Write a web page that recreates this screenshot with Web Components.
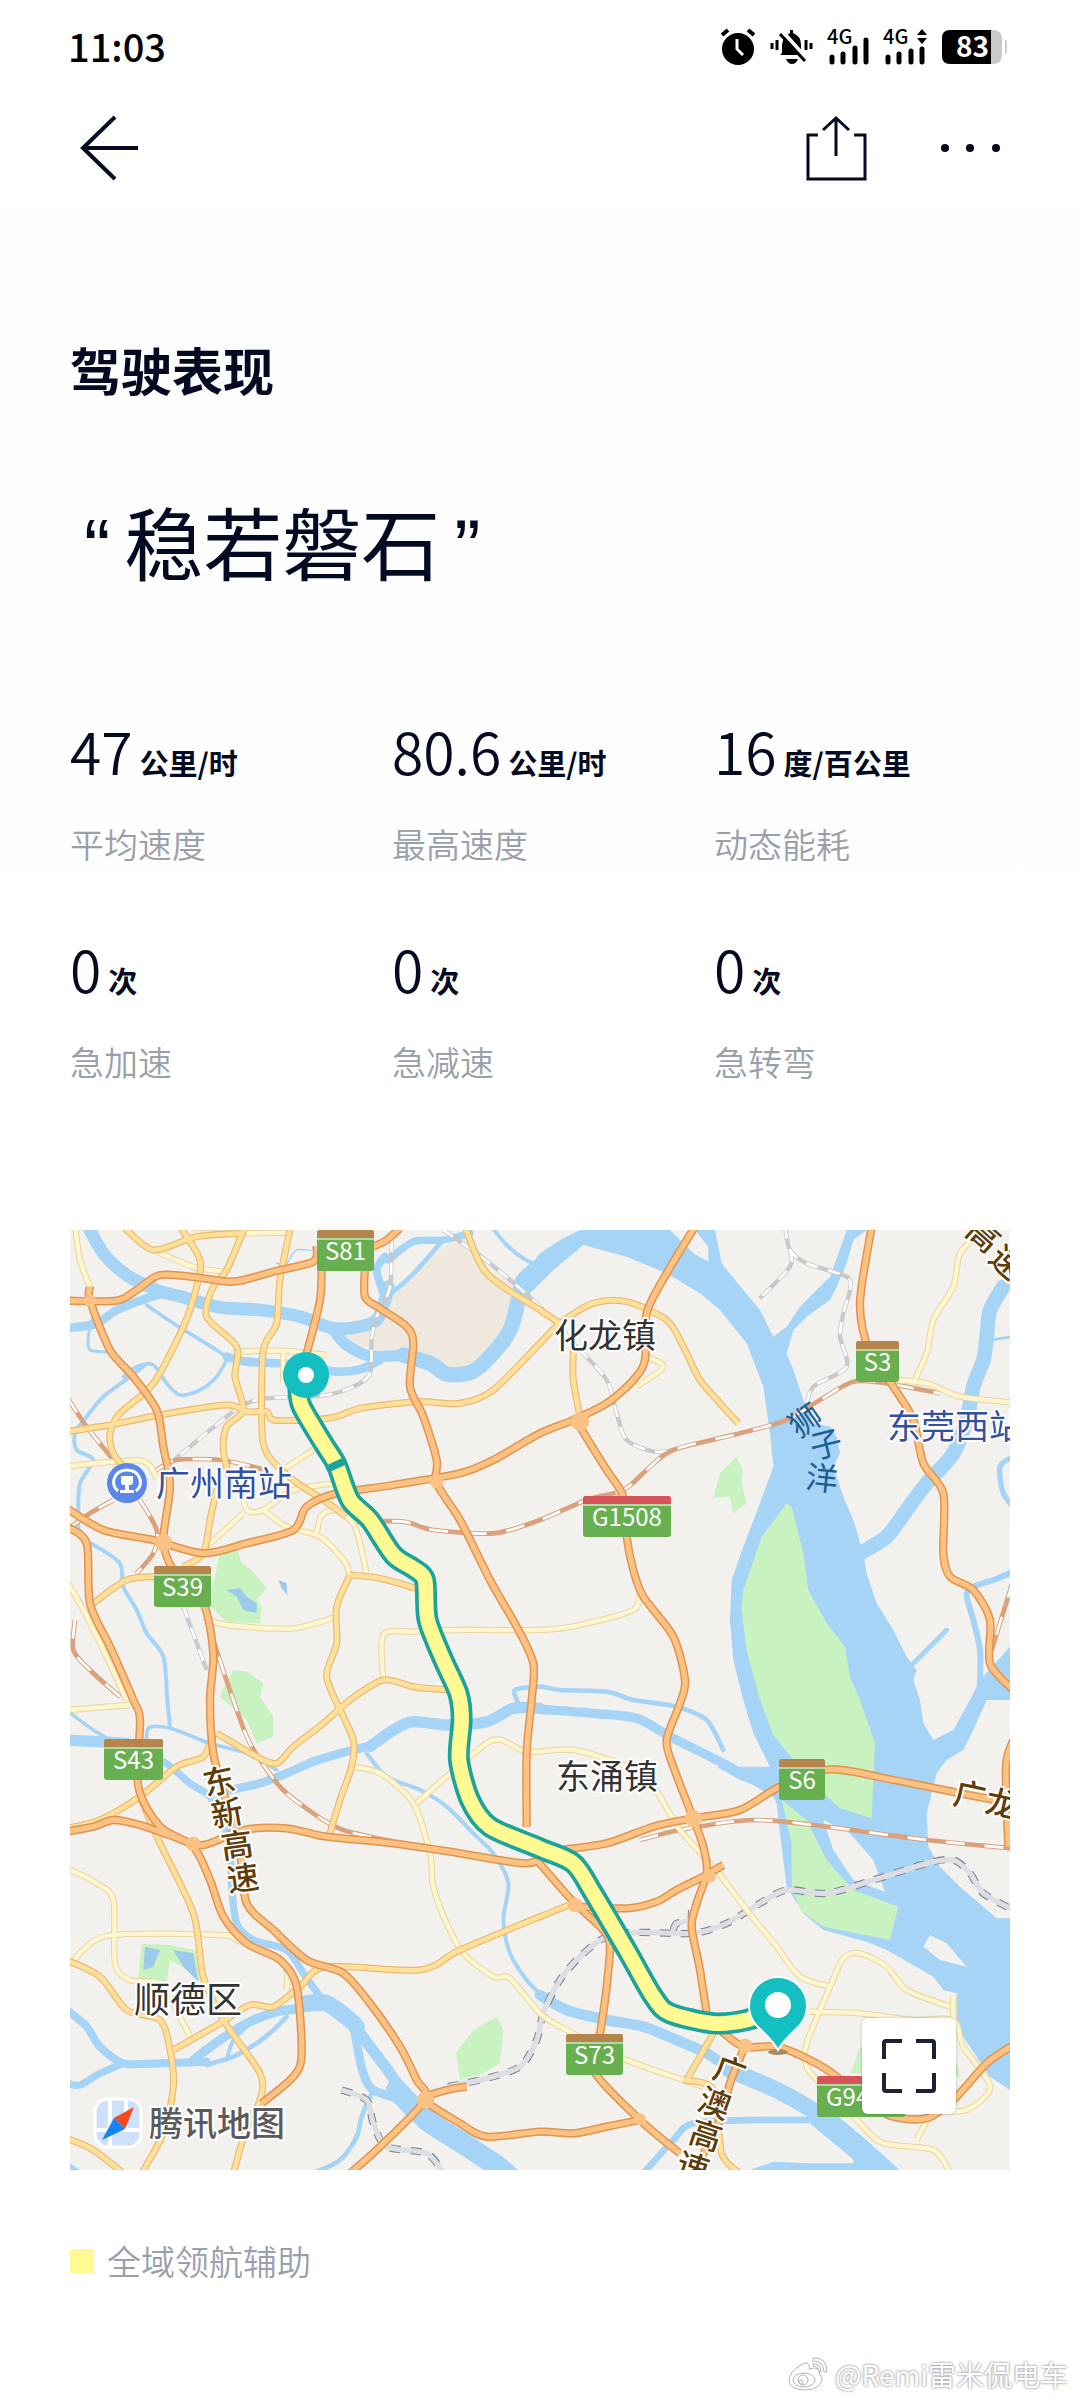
<!DOCTYPE html>
<html lang="zh-CN">
<head>
<meta charset="utf-8">
<meta name="viewport" content="width=device-width, initial-scale=1">
<title>驾驶表现</title>
<style>
    :root {
        --ink: #040a22;
        --muted: #9b9fab;
        --side: 70px;
    }
    body {
        margin: 0;
        background: #fff;
        color: var(--ink);
        font-family: "Noto Sans CJK SC", "Noto Sans", sans-serif;
    }
</style>
</head>
<body>
<drive-report></drive-report>

<script>
// Phone status bar: clock on the left, icons on the right
class StatusBar extends HTMLElement {
    constructor() {
        super();
        this.attachShadow({ mode: 'open' });
        this.shadowRoot.innerHTML = `
            <style>
            :host {
                display: flex;
                justify-content: space-between;
                align-items: center;
                height: 92px;
                padding: 0 72px 0 68px;
                color: #000;
            }
            time {
                font-size: 38px;
                line-height: 48px;
                font-weight: 500;
            }
            .icons {
                display: flex;
                align-items: center;
                gap: 13px;
            }
            svg { display: block; overflow: visible; }
            text { font-family: "Noto Sans CJK SC", sans-serif; }
            </style>
            <time>11:03</time>
            <div class="icons">
                <svg width="38" height="40" viewBox="0 0 38 40">
                    <circle cx="19" cy="23" r="16"/>
                    <path d="M3 9l6-5M35 9l-6-5" stroke="#000" stroke-width="4"/>
                    <path d="M18 13v10l6 6" fill="none" stroke="#fff" stroke-width="3"/>
                </svg>
                <svg width="44" height="40" viewBox="0 0 44 40">
                    <path d="M12 27V19q1-9 8-12V4h3v3q8 3 8 12v8l2 2H10z"/>
                    <path d="M16 33h12q-2 5-6 5t-6-5z"/>
                    <path d="M2 17v6M7 14v10M36 14v10M41 17v6" stroke="#000" stroke-width="3"/>
                    <path d="M13 6l25 28" stroke="#fff" stroke-width="4"/>
                    <path d="M10 8l25 27" stroke="#000" stroke-width="3"/>
                </svg>
                <svg width="43" height="40" viewBox="0 0 43 40">
                    <text x="0" y="18" font-size="20" font-weight="500">4G</text>
                    <path d="M5 31v5M16 28v8M28 22v14M39 14v22" stroke="#000" stroke-width="5" stroke-linecap="round"/>
                </svg>
                <svg width="46" height="40" viewBox="0 0 46 40">
                    <text x="0" y="18" font-size="20" font-weight="500">4G</text>
                    <path d="M34 9l5-6 5 6zM34 12l5 6 5-6z"/>
                    <path d="M5 31v5M16 28v8M28 25v11M39 23v13" stroke="#000" stroke-width="5" stroke-linecap="round"/>
                </svg>
                <svg width="66" height="40" viewBox="0 0 66 40">
                    <path d="M8 4h42v34H8q-8 0-8-8V12q0-8 8-8z"/>
                    <path d="M49 4h2q9 0 9 9v16q0 9-9 9h-2zM63 14q2 0 2 2v10q0 2-2 2z" fill="#cacaca"/>
                    <text x="14" y="31" font-size="28" font-weight="700" fill="#fff">83</text>
                </svg>
            </div>
        `;
    }
}
customElements.define('status-bar', StatusBar);


class NavBar extends HTMLElement {
    constructor() {
        super();
        this.attachShadow({ mode: 'open' });
        this.shadowRoot.innerHTML = `
            <style>
            :host {
                display: flex;
                justify-content: space-between;
                align-items: center;
                height: 112px;
                padding: 0 76px 6px 72px;
                color: var(--ink);
            }
            div {
                display: flex;
                gap: 60px;
            }
            button {
                display: block;
                padding: 0;
                border: 0;
                background: none;
                color: inherit;
                cursor: pointer;
            }
            svg {
                display: block;
                fill: none;
                stroke: currentColor;
                stroke-width: 3;
            }
            </style>
            <button aria-label="返回">
                <svg width="72" height="72" viewBox="0 0 72 72"><path d="M66 36H11M43 5L11 36l32 31" stroke-width="4"/></svg>
            </button>
            <div>
                <button aria-label="分享">
                    <svg width="72" height="72" viewBox="0 0 72 72">
                        <path d="M18 23H8v44h57V23H54M36 44V6M23 18L36 6l13 12"/>
                    </svg>
                </button>
                <button aria-label="更多">
                    <svg width="72" height="72" viewBox="0 0 72 72">
                        <g fill="currentColor" stroke="none"><circle cx="13" cy="36" r="4"/><circle cx="38" cy="36" r="4"/><circle cx="64" cy="36" r="4"/></g>
                    </svg>
                </button>
            </div>
        `;
    }
}
customElements.define('nav-bar', NavBar);


// One figure: value and unit as attributes, the label is slotted
class StatItem extends HTMLElement {
    constructor() {
        super();
        this.attachShadow({ mode: 'open' });
        this.shadowRoot.innerHTML = `
            <style>
            :host { display: block; }
            .figure {
                display: flex;
                align-items: baseline;
                gap: 7px;
                height: 72px;
                line-height: 72px;
                white-space: nowrap;
            }
            .value {
                font-size: 57px;
                font-weight: 350;
            }
            .unit {
                font-size: 29px;
                font-weight: 700;
            }
            .label {
                margin-top: 34px;
                font-size: 34px;
                line-height: 48px;
                font-weight: 350;
                color: var(--muted);
            }
            </style>
            <div class="figure"><span class="value"></span><span class="unit"></span></div>
            <div class="label"><slot></slot></div>
        `;
    }
    connectedCallback() {
        this.shadowRoot.querySelector('.value').textContent = this.getAttribute('value');
        this.shadowRoot.querySelector('.unit').textContent = this.getAttribute('unit');
    }
}
customElements.define('stat-item', StatItem);


// ---- map data: "x,y x,y ..." on a 3x grid, [width, points] for water ----
const rivers = [
    [38, '85,20 130,100 200,165 290,210 370,232 480,262 600,270 720,290 820,325 900,320 950,300 975,240 985,200'],
    [26, '20,325 110,310 170,270 260,235 330,215'],
    [11, '260,255 340,310 430,365 500,410'],
    [26, '500,410 560,425 660,430 740,440 830,455 900,448 960,420'],
    [34, '820,330 860,375 930,408 1050,405'],
    [46, '1030,405 1110,430 1160,462 1230,458 1290,410 1350,330 1375,240 1390,180 1450,130'],
    [22, '985,120 1060,65 1150,60 1230,40'],
    [24, '975,110 950,150 970,220 975,260'],
    [14, '1150,60 1080,140 1030,190 980,230'],
    [12, '1295,20 1340,75 1390,115 1440,140'],
    [5, '650,130 680,130 710,90 780,95'],
    [12, '250,440 210,470 130,530 80,590 45,640 50,690 100,720 60,790 55,870 60,950 110,980 180,1030 190,1100 230,1170 260,1240 310,1310 322,1440 330,1520'],
    [11, '190,470 230,440 280,435 320,490 360,525 420,510 470,470 500,420'],
    [9, '95,300 85,350 90,390 150,400 195,455'],
    [34, '20,1560 200,1570'],
    [22, '180,1570 310,1625 390,1690 450,1730 490,1800 510,1900 515,2000 530,2110 580,2160 680,2190 730,2260 780,2330'],
    [50, '740,2350 800,2350 870,2400 890,2420'],
    [34, '880,2410 930,2480 990,2560 1030,2620'],
    [64, '1010,2610 1100,2700 1200,2765 1300,2830 1360,2880'],
    [10, '20,1470 100,1530 170,1570'],
    [11, '260,1590 265,1525 330,1525 450,1570 560,1600 650,1650'],
    [26, '510,1710 600,1690 680,1660 760,1625 860,1595 940,1575'],
    [34, '930,1580 1000,1530 1060,1505 1160,1515 1280,1505 1360,1465 1440,1465'],
    [28, '1430,1467 1600,1480 1730,1495 1830,1550 1970,1620 2080,1680 2150,1720'],
    [14, '1375,1450 1365,1410 1440,1400 1500,1410 1640,1415 1720,1440 1850,1460 1940,1500 1990,1590'],
    [24, '20,2370 80,2420 120,2480 190,2530 300,2530 440,2525'],
    [22, '20,2590 60,2595 120,2560 190,2530'],
    [28, '400,2520 480,2460 560,2410 650,2375 720,2365 800,2350'],
    [14, '440,2535 520,2510 590,2470 640,2430 680,2390'],
    [12, '500,2520 520,2460 560,2420'],
    [26, '880,2400 890,2470 910,2560 940,2610 1030,2640'],
    [14, '940,2610 905,2690 890,2750 840,2820 760,2860'],
    [12, '920,1600 980,1670 1080,1710 1160,1760 1240,1840 1300,1900 1345,1990 1330,2100 1350,2200 1400,2280 1440,2320'],
    [32, '1440,2325 1520,2370 1640,2400 1750,2420 1850,2460 1940,2500 2030,2560'],
    [50, '2010,2550 2150,2610 2240,2660 2300,2700'],
    [70, '2280,2690 2400,2790 2500,2880'],
    [20, '1750,2860 1840,2760 1900,2710 2100,2700 2240,2700'],
    [44, '2830,200 2790,270 2780,350 2770,420 2740,500 2720,600 2680,700 2600,790 2540,870 2480,950 2400,1000'],
    [8, '2860,350 2790,360'],
    [16, '2860,710 2820,740 2830,820 2860,860'],
    [18, '2860,1055 2800,1080 2740,1100 2720,1125 2740,1200 2760,1290 2760,1400'],
    [14, '2660,1230 2600,1290 2540,1350']
];
const sea = [
    '1830,30 1900,100 1945,125 1945,80 1905,30 1965,30 1985,130 2050,210 2100,270 2140,350 2180,320 2220,260 2260,220 2310,170 2325,130 2350,60 2360,30 2420,30 2380,60 2360,130 2330,200 2310,240 2240,290 2200,330 2180,400 2200,450 2230,540 2260,610 2310,620 2330,650 2340,700 2320,740 2350,830 2380,900 2410,1000 2420,1060 2450,1150 2500,1230 2540,1310 2570,1350 2560,1380 2580,1440 2590,1510 2620,1560 2680,1530 2730,1440 2760,1380 2850,1280 2850,1440 2780,1440 2740,1530 2710,1590 2660,1620 2630,1660 2600,1780 2605,1880 2640,1940 2700,2000 2810,2095 2850,2095 2850,2610 2790,2570 2710,2450 2690,2400 2690,2320 2650,2310 2620,2270 2550,2230 2480,2190 2420,2165 2290,2130 2230,2080 2180,2000 2160,1840 2150,1750 2130,1710 2040,1680 1970,1640 2130,1640 2080,1540 2050,1440 2020,1320 2010,1200 2015,1080 2050,980 2100,850 2140,740 2130,640 2110,500 2060,370 1980,270 1920,220 1820,160 1700,110 1570,75 1480,150 1400,230 1375,240 1390,160 1440,100 1500,60 1560,30',
    '2070,2850 2140,2825 2240,2830 2380,2830 2380,2800 2300,2730 2260,2690 2320,2700 2400,2760 2490,2850',
    '30,2830 60,2850 30,2850'
];
const parks = [
    '2180,850 2105,950 2050,1110 2045,1170 2060,1290 2100,1440 2140,1545 2200,1620 2290,1720 2340,1765 2435,1795 2445,1570 2400,1440 2370,1370 2355,1280 2300,1210 2245,1110 2230,1000 2195,860',
    '2165,1740 2240,1800 2300,1920 2380,2010 2515,2060 2490,2160 2290,2120 2220,2070 2195,2000 2195,1870',
    '480,990 530,985 545,1030 575,1050 620,1105 590,1140 605,1160 600,1210 500,1205 440,1150 465,1070',
    '500,1385 520,1350 560,1355 610,1390 600,1430 640,1490 640,1550 590,1570 560,1500 480,1430',
    '245,2172 330,2175 405,2190 425,2290 380,2250 330,2220 320,2285 235,2275',
    '1310,2390 1330,2430 1320,2530 1270,2560 1200,2580 1188,2500 1240,2430',
    '2030,710 2048,750 2045,790 2060,850 2020,880 2010,830 1960,833 1980,760',
    '2400,2480 2372,2560 2700,2570 2680,2490'
];
const islets = [
    '2290,1800 2370,1840 2440,1920 2475,2015 2380,1980 2320,1890',
    '2610,2145 2660,2170 2720,2240 2640,2220 2590,2180'
];
const ponds = [
    '500,1110 540,1105 560,1130 590,1150 590,1180 550,1170 530,1130',
    '655,1080 680,1090 682,1125 665,1105',
    '255,2180 300,2190 280,2240 250,2250',
    '340,2190 400,2200 415,2285 370,2240'
];
const minor = [
    '45,20 60,120 90,200', '280,90 400,140 490,155', '400,40 550,40 690,38', '520,395 660,392 800,405', '670,400 670,490',
    '20,740 240,722 290,775', '660,755 760,690', '545,800 560,870 610,870 700,810 820,790', '550,880 440,980',
    '610,870 680,920 780,950 850,1020 870,1065', '770,940 785,885 830,872 885,920 920,1060', '430,1190 500,1215 700,1225 830,1190',
    '970,1380 970,1245 1060,1235 1200,1230 1440,1230 1560,1215 1720,1170 1740,1110', '20,1085 60,1150 130,1290 200,1440',
    '20,1470 210,1455', '20,1945 110,1990 160,2040 165,2230 210,2280 290,2285', '30,2235 140,2148 480,2145 530,2160 670,2225 680,2310',
    '870,1640 960,1660 1060,1750 1110,1900 1120,2000 1160,2110 1210,2200 1300,2270 1350,2275 1440,2380 1520,2430 1700,2520 1870,2580 1930,2600',
    '1070,1750 1160,1670 1300,1560 1400,1595 1540,1590 1700,1640 1780,1700 1860,1830 1960,1940 2060,2070 2150,2180 2220,2270 2310,2300',
    '2310,2300 2350,2215 2400,2200 2480,2240 2540,2310 2670,2360', '2680,2420 2680,2330', '2310,2300 2240,2470 2240,2540 2280,2590 2400,2710 2470,2770 2620,2790 2670,2860',
    '2250,2375 2400,2380 2560,2400 2680,2400 2710,2480 2790,2600 2720,2670 2620,2680 2570,2760', '2760,40 2700,100 2680,200 2620,300 2600,400 2560,490',
    '2480,478 2600,490 2700,530 2860,548', '1745,405 1810,440 1730,500', '330,2330 390,2450'
];
const secondary = [
    '190,20 280,90 410,50 550,40', '360,20 420,120 410,200 370,320 280,490 180,580 150,640 160,700 200,750',
    '555,20 500,150 460,200 440,290 530,380 525,470 550,570 500,620 490,690 510,780', '692,20 660,180 650,310 610,390 605,600 620,700 700,780 790,840 860,890',
    '20,635 150,615 300,585 500,555 560,575 620,575 640,600 740,600 830,590 900,565 1070,545 1200,550 1300,510 1440,370 1500,310 1600,250 1700,245 1820,300 1870,380 1920,480 1980,550 2035,610',
    '1215,20 1280,160 1440,270 1500,310', '1540,390 1540,480 1560,590', '475,790 450,900 430,1000 370,1040', '100,1150 200,1080 290,1070',
    '870,1065 830,1160 830,1270 800,1370 850,1490 880,1560 875,1640 840,1740 810,1840', '870,1065 960,1075 1070,1105',
    '1170,1410 1060,1400 970,1380 870,1440 790,1510 700,1580 650,1630 590,1610 470,1540', '20,1825 120,1800 240,1730 350,1640 430,1610 460,1540',
    '240,1730 300,1870 400,2080 430,2270 490,2400 600,2560 600,2640 560,2720 520,2860', '20,2220 120,2270 200,2370 300,2400 330,2490 340,2600 310,2740 245,2860',
    '340,2490 480,2410 570,2355 640,2360 720,2300 800,2240 1080,2250 1200,2190 1440,2090 1540,2050', '20,2755 100,2790 190,2860',
    '1960,2440 1880,2580', '1870,2580 1960,2610 1985,2800 2040,2860'
];
const highways = [
    '20,242 170,242 230,210 300,165 410,172 520,185 640,155 760,125 770,80', '90,200 90,242 150,390 220,470 290,570 310,680 330,800 310,960 340,1050 430,1150 460,1300 450,1440 460,1600 500,1750 540,1900 560,2050 640,2130 740,2220 850,2260 930,2350 1020,2480 1070,2580 1095,2640 960,2780 870,2860',
    '785,140 780,240 740,400', '915,140 915,230 960,265 1040,320 1060,370 1050,500 1090,590 1130,720 1130,790 1200,900 1290,1080 1370,1220 1420,1330 1415,1440 1400,1600 1400,1820',
    '20,865 130,930 280,960 430,1000 560,970 700,930 740,860 830,820 1000,795 1200,760 1300,720 1440,640 1540,600 1640,550 1720,480 1755,420 1760,280 1820,160 1905,20',
    '20,920 80,970 90,1150 150,1280 220,1440 240,1500 235,1700 300,1820 400,1880 450,1980 490,2090 560,2170 660,2220 710,2300 725,2500 700,2570 605,2650',
    '20,1835 100,1820 160,1800 240,1815 340,1850 430,1875 550,1830 680,1825 800,1850 1000,1870 1200,1900 1400,1930 1480,1895 1640,1870 1780,1820 1900,1795 2040,1770 2160,1700 2310,1648 2500,1680 2700,1720 2860,1750',
    '1220,2600 1160,2610 1095,2640 1200,2710 1280,2750 1440,2735 1540,2740 1640,2720 1740,2700', '1560,620 1640,750 1690,830 1700,950 1720,1050 1750,1130 1840,1250 1875,1380 1860,1450 1820,1560 1840,1640 1890,1770 1930,1880 1940,1960 1910,2050 1895,2120 1920,2250 1940,2380',
    '2435,20 2400,250 2430,400 2500,500 2560,600 2590,730 2650,820 2650,1000 2670,1070 2740,1110 2790,1200 2790,1330 2860,1410', '2860,1560 2838,1640 2845,1880',
    '1430,1920 1540,2045 1630,2130 1650,2180 1640,2300 1620,2440 1600,2550 1740,2700 1860,2800', '1550,2060 1700,2065 1790,2045 1850,2010 1930,1970 1990,1935',
    '1980,2430 2050,2480 2150,2480 2250,2520 2330,2570 2400,2640 2500,2690 2600,2695 2680,2640 2780,2530 2860,2475', '2050,2490 2010,2590 1980,2700 1900,2860', '940,80 980,60 1020,25'
];
const grayRails = [
    '995,60 990,200 950,290 935,360 930,460 880,500 800,525 620,535 560,550 500,590 330,730', '1150,30 1250,100 1350,180 1440,260 1560,390 1640,480 1670,580 1700,660 1780,695 1840,690',
    '2175,20 2190,90 2240,130 2360,170 2370,210 2350,280 2340,350 2360,440 2260,500 2240,560', '2190,90 2190,140 2100,235', '370,1160 440,1350'
];
const brownRails = [
    '20,530 80,620 160,720', '290,750 350,720 480,720 620,750', '20,930 90,880 160,840', '240,840 290,930 280,1000 230,1060',
    '880,905 1030,905 1120,930 1300,940 1440,900 1580,840 1690,810 1760,750 1840,690 2040,640 2180,600 2280,540 2380,485 2480,490 2640,520', '45,1200 40,1290 90,1350 180,1430',
    '440,1200 520,1440 570,1570 660,1700 760,1780 850,1830 1000,1865', '1740,1860 1860,1830 2080,1800 2300,1820 2600,1860 2860,1886', '2860,1080 2795,1290'
];
const plannedRails = [
    '1165,2600 1280,2575 1380,2540 1430,2460 1450,2380 1500,2280 1560,2210 1640,2150 1740,2137 1900,2140 2000,2110 2100,2050 2180,2010 2300,2020 2440,1980 2600,1930 2680,1920 2730,1960 2770,2020 2860,2070',
    '845,2610 920,2640 940,2710 980,2780 1100,2800 1150,2860', '1840,2130 1850,2110 1890,2100 1895,2070'
];
const route = '715,500 725,560 790,670 830,735 870,840 930,900 1000,1005 1060,1045 1095,1080 1103,1200 1150,1320 1195,1420 1205,1500 1197,1620 1230,1740 1290,1820 1440,1885 1540,1930 1600,2020 1700,2190 1780,2330 1830,2380 1960,2410 2060,2400 2150,2370';

// place names and shields are on the 940x940 grid
const places = [
    ['广州南站', 154, 253, 34, 'station'], ['东莞西站', 885, 196, 34, 'station'], ['化龙镇', 535, 105, 34, 'town'],
    ['东涌镇', 537, 546, 34, 'town'], ['顺德区', 118, 769, 36, 'town']
];
const turned = [
    ['狮', 735, 190, -35, 'sea'], ['子', 756, 214, -14, 'sea'], ['洋', 752, 248, 6, 'sea'],
    ['东', 149, 551, -12, 'way'], ['新', 157, 583, -10, 'way'], ['高', 167, 615, -8, 'way'], ['速', 173, 648, -8, 'way'],
    ['广', 660, 841, 20, 'way'], ['澳', 645, 873, 20, 'way'], ['高', 636, 905, 18, 'way'], ['速', 623, 937, 18, 'way'],
    ['广', 900, 565, 12, 'way'], ['龙', 932, 573, 12, 'way'], ['高', 914, 5, 42, 'way'], ['速', 937, 32, 42, 'way']
];
const shields = [
    ['S81', 247, 0, 57, 'province'], ['S39', 84, 336, 57, 'province'], ['S43', 34, 509, 59, 'province'], ['G1508', 513, 266, 88, 'national'],
    ['S3', 786, 111, 43, 'province'], ['S6', 709, 529, 46, 'province'], ['S73', 496, 804, 57, 'province'], ['G9411', 747, 846, 88, 'national']
];

// Catmull-Rom through the points, softened, as cubic segments
function curve(points) {
    const p = points.split(' ').map(s => s.split(',').map(Number));
    let d = `M${p[0]}`;
    for (let i = 0; i < p.length - 1; i++) {
        const a = p[i - 1] || p[i], b = p[i], c = p[i + 1], e = p[i + 2] || c;
        const at = (q, r, s, k) => Math.round(q[k] + (r[k] - s[k]) / 7);
        d += `C${at(b, c, a, 0)},${at(b, c, a, 1)} ${at(c, b, e, 0)},${at(c, b, e, 1)} ${c}`;
    }
    return d;
}
const lines = (list, cls) => list.map(s => `<path class="${cls}" d="${curve(s)}"/>`).join('');
const areas = (list, cls) => list.map(s => `<polygon class="${cls}" points="${s}"/>`).join('');
const halo = (t, x, y, size, cls, turn = 0) =>
    `<text class="${cls}" x="${x}" y="${y + Math.round(size * 0.38)}" font-size="${size}" transform="rotate(${turn} ${x} ${y})">${t}</text>`;
const shield = ([t, x, y, w, kind]) => `
    <rect x="${x}" y="${y}" width="${w}" height="41" rx="3" fill="#68b04f"/>
    <path class="${kind}" d="M${x} ${y + 8}v-5q0-3 3-3h${w - 6}q3 0 3 3v5z"/>
    <path d="M${x} ${y + 9}h${w}" stroke="#fff" stroke-width="1"/>
    <text class="code" x="${x + w / 2}" y="${y + 30}">${t}</text>`;

class TripMap extends HTMLElement {
    constructor() {
        super();
        this.attachShadow({ mode: 'open' });
        this.shadowRoot.innerHTML = `
            <style>
            :host {
                display: block;
                position: relative;
                aspect-ratio: 1;
                overflow: hidden;
                background: #f2f1ed;
            }
            svg { display: block; }
            .map { width: 100%; height: 100%; }
            .lines path { fill: none; stroke-linejoin: round; }
            .water { fill: #a6d4f7; }
            .river { stroke: #a6d4f7; stroke-linecap: round; }
            .park { fill: #c8f2c0; }
            .pond { fill: #9cc9ec; }
            .land { fill: #f2f1ed; }
            .minor-case { stroke: #e6d6a4; stroke-width: 19; }
            .minor { stroke: #fff6cf; stroke-width: 13; }
            .second-case { stroke: #e9ba72; stroke-width: 21; }
            .second { stroke: #ffe09b; stroke-width: 14; }
            .high-case { stroke: #e0944d; stroke-width: 25; }
            .high { stroke: #fcc283; stroke-width: 16; }
            .gray-rail { stroke: #c9c9cb; stroke-width: 13; }
            .gray-gap { stroke: #fff; stroke-width: 8; stroke-dasharray: 36 32; }
            .brown-rail { stroke: #d9a17c; stroke-width: 14; }
            .brown-gap { stroke: #fff; stroke-width: 8; stroke-dasharray: 56 60; }
            .plan-dash { stroke: #7d818c; stroke-width: 22; stroke-dasharray: 32 30; }
            .plan { stroke: #dcdee3; stroke-width: 16; }
            .route-case { stroke: #1ca39b; stroke-width: 66; }
            .route { stroke: #fffa91; stroke-width: 44; }
            text {
                font-family: "Noto Sans CJK SC", "Noto Sans", sans-serif;
                text-anchor: middle;
                paint-order: stroke;
                stroke: #fff;
                stroke-width: 4;
                stroke-linejoin: round;
            }
            .town { fill: #333; }
            .station { fill: #3350a3; }
            .sea { fill: #1c5f93; stroke: none; }
            .way { fill: #5e3d0a; font-weight: 500; }
            .code { fill: #fff; stroke: none; font-size: 24px; }
            .brand { fill: #5b5b5e; font-weight: 500; }
            .province { fill: #b5854b; }
            .national { fill: #d65457; }
            button {
                position: absolute;
                right: 54px;
                bottom: 56px;
                width: 94px;
                height: 96px;
                padding: 0;
                display: grid;
                place-items: center;
                border: 0;
                border-radius: 6px;
                background: #fff;
                box-shadow: 0 0 3px rgba(0, 0, 0, .25);
                cursor: pointer;
            }
            </style>
            <svg class="map" viewBox="0 0 940 940" role="img" aria-label="行程地图">
                <g class="lines" transform="translate(-10 -10) scale(.33333)">
                    <polygon fill="#eee8de" points="1160,75 1230,60 1290,150 1350,190 1370,240 1340,330 1270,400 1200,470 1110,420 1040,400 900,380 860,350 930,320 980,250 1060,170"/>
                    ${rivers.map(([w, s]) => `<path class="river" stroke-width="${w}" d="${curve(s)}"/>`).join('')}
                    ${areas(sea, 'water')}
                    ${areas(parks, 'park')}
                    ${areas(islets, 'land')}
                    ${areas(ponds, 'pond')}
                    ${lines(plannedRails, 'plan-dash')}${lines(plannedRails, 'plan')}
                    ${lines(grayRails, 'gray-rail')}${lines(grayRails, 'gray-gap')}
                    ${lines(brownRails, 'brown-rail')}${lines(brownRails, 'brown-gap')}
                    ${lines(minor, 'minor-case')}${lines(minor, 'minor')}
                    ${lines(secondary, 'second-case')}${lines(secondary, 'second')}
                    ${lines(highways, 'high-case')}${lines(highways, 'high')}
                    <g fill="#fcc283">
                        <circle cx="90" cy="242" r="18"/><circle cx="310" cy="968" r="26"/><circle cx="1130" cy="785" r="20"/>
                        <circle cx="1560" cy="605" r="28"/><circle cx="1900" cy="1796" r="26"/><circle cx="1097" cy="2640" r="26"/>
                        <circle cx="400" cy="1872" r="22"/><circle cx="1545" cy="2055" r="22"/><circle cx="1740" cy="2698" r="18"/>
                        <circle cx="2056" cy="2478" r="22"/><circle cx="1950" cy="1970" r="18"/>
                    </g>
                    <path class="route-case" d="${curve(route)}"/>
                    <path class="route" d="${curve(route)}"/>
                    <path d="M800 748l56-26" stroke="#1ca39b" stroke-width="22"/>
                </g>
                ${shields.map(shield).join('')}
                ${places.map(p => halo(...p)).join('')}
                ${turned.map(([t, x, y, turn, cls]) => halo(t, x, y, 32, cls, turn)).join('')}

                <!-- railway station -->
                <circle cx="57" cy="253" r="20" fill="#5b86ec"/>
                <path d="M48 261q-6-5-4-12 3-9 13-9t13 9q2 7-4 12" fill="none" stroke="#fff" stroke-width="3"/>
                <path d="M51 246h12v6q0 3-3 3h-1v5h5v3H50v-3h5v-5h-1q-3 0-3-3z" fill="#fff"/>

                <!-- start and end of the trip -->
                <circle cx="236" cy="145" r="23" fill="#13bfc0"/>
                <circle cx="236" cy="145" r="8" fill="#fff"/>
                <ellipse cx="708" cy="822" rx="10" ry="3" fill="#a98a68"/>
                <path d="M708 820Q703 811 687 796A29 29 0 1 1 729 796Q713 811 708 820z" fill="#13bfc0" stroke="#fff" stroke-width="2"/>
                <circle cx="708" cy="775" r="13" fill="#fff"/>

                <!-- map provider -->
                <rect x="25" y="869" width="46" height="48" rx="13" fill="#cfe0fa" stroke="#fff" stroke-width="3"/>
                <path d="M40 870v46M26 900h44M56 870v30" stroke="#fff" stroke-width="4"/>
                <path d="M64 877L44 888l11 11z" fill="#f8481c"/>
                <path d="M32 910l12-22 11 11z" fill="#1583f5"/>
                <text class="brand" x="147" y="906" font-size="34">腾讯地图</text>
            </svg>
            <button aria-label="全屏">
                <svg width="56" height="56" viewBox="0 0 56 56" fill="none" stroke="#1d2236" stroke-width="4">
                    <path d="M3 21V5q0-2 2-2h16M35 3h16q2 0 2 2v16M53 35v16q0 2-2 2H35M21 53H5q-2 0-2-2V35"/>
                </svg>
            </button>
        `;
    }
}
customElements.define('trip-map', TripMap);


class MapLegend extends HTMLElement {
    constructor() {
        super();
        this.attachShadow({ mode: 'open' });
        this.shadowRoot.innerHTML = `
            <style>
            :host {
                display: flex;
                align-items: center;
                gap: 13px;
                font-size: 34px;
                line-height: 48px;
                font-weight: 350;
                color: var(--muted);
            }
            i {
                width: 24px;
                height: 24px;
                background: #fffa91;
            }
            </style>
            <i></i><span><slot></slot></span>
        `;
    }
}
customElements.define('map-legend', MapLegend);


class WaterMark extends HTMLElement {
    constructor() {
        super();
        this.attachShadow({ mode: 'open' });
        this.shadowRoot.innerHTML = `
            <style>
            :host {
                display: flex;
                justify-content: flex-end;
                align-items: center;
                gap: 6px;
                padding: 0 12px 6px;
                font-size: 28px;
                line-height: 40px;
                color: #fff;
                text-shadow: 0 0 3px #999, 0 0 2px #aaa;
            }
            svg { display: block; }
            </style>
            <svg width="42" height="36" viewBox="0 0 42 36" fill="#fff" stroke="#b4b4b4" stroke-width="1">
                <path d="M14 9q6-4 8 0 1 2 0 4 6-2 9 0 2 2 1 5 4 2 3 6-2 9-16 10Q3 34 2 25 2 16 14 9z"/>
                <path d="M26 8q8-1 8 8l-2 0q0-6-6-6zM26 2q14-1 14 14l-3 0q0-11-11-11z"/>
                <ellipse cx="17" cy="24" rx="11" ry="7"/>
                <circle cx="16" cy="24" r="5"/>
                <circle cx="14" cy="26" r="2"/>
            </svg>
            <span><slot></slot></span>
        `;
    }
}
customElements.define('water-mark', WaterMark);


class DriveReport extends HTMLElement {
    constructor() {
        super();
        this.attachShadow({ mode: 'open' });
        this.shadowRoot.innerHTML = `
            <style>
            :host { display: block; }
            main {
                padding: 131px var(--side) 0;
                background: linear-gradient(#fcfcfd, #fff 800px);
            }
            h1 {
                margin: 0;
                font-size: 51px;
                line-height: 56px;
                font-weight: 700;
            }
            .verdict {
                margin: 96px 0 0;
                font-size: 79px;
                line-height: 96px;
                font-weight: 400;
            }
            .verdict span {
                padding: 0 14px;
                font-family: "Liberation Sans", sans-serif;
                line-height: 40px;
            }
            .stats {
                display: grid;
                grid-template-columns: repeat(3, 1fr);
                gap: 64px 26px;
                margin: 125px 0 144px;
            }
            map-legend { margin-top: 67px; }
            water-mark { margin-top: 69px; }
            </style>
            <header>
                <status-bar></status-bar>
                <nav-bar></nav-bar>
            </header>
            <main>
                <h1>驾驶表现</h1>
                <p class="verdict"><span>“</span>稳若磐石<span>”</span></p>
                <section class="stats">
                    <stat-item value="47" unit="公里/时">平均速度</stat-item>
                    <stat-item value="80.6" unit="公里/时">最高速度</stat-item>
                    <stat-item value="16" unit="度/百公里">动态能耗</stat-item>
                    <stat-item value="0" unit="次">急加速</stat-item>
                    <stat-item value="0" unit="次">急减速</stat-item>
                    <stat-item value="0" unit="次">急转弯</stat-item>
                </section>
                <trip-map></trip-map>
                <map-legend>全域领航辅助</map-legend>
            </main>
            <water-mark>@Remi雷米侃电车</water-mark>
        `;
    }
}
customElements.define('drive-report', DriveReport);
</script>
</body>
</html>
